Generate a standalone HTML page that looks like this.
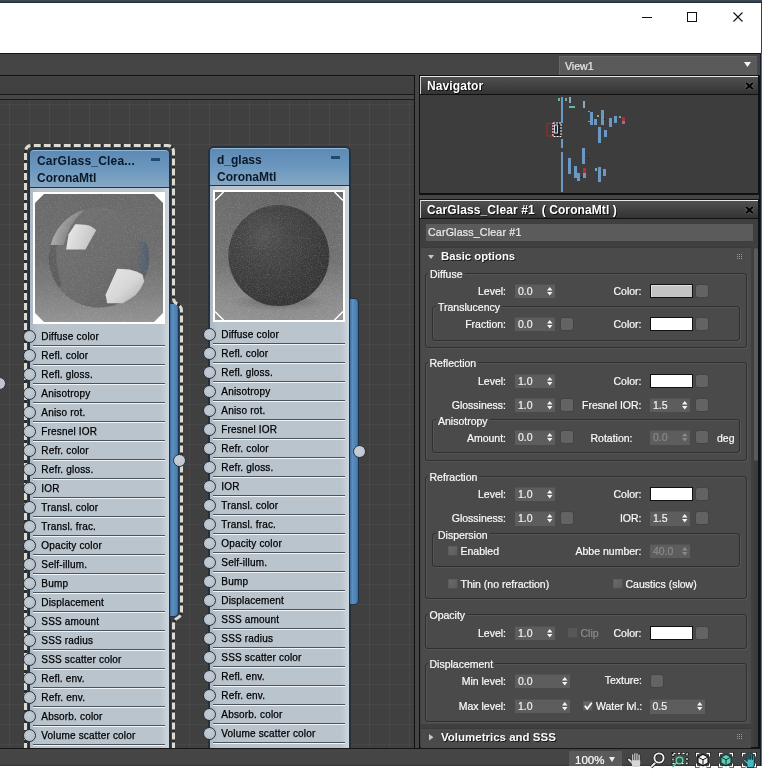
<!DOCTYPE html><html><head><meta charset="utf-8"><style>
*{margin:0;padding:0;box-sizing:border-box}
html,body{width:762px;height:776px;overflow:hidden;background:#fff;position:relative;font-family:"Liberation Sans",sans-serif}
#w{position:absolute;left:0;top:0;width:762px;height:776px;will-change:transform;background:#fff}
#w>div,.abs{position:absolute}
.t{position:absolute;white-space:pre;line-height:1;font-size:10.5px;color:#fff;-webkit-text-stroke:.2px currentColor}
.nt{position:absolute;white-space:pre;line-height:1;font-size:10px;letter-spacing:.18px;color:#000;-webkit-text-stroke:.25px #000}
svg{position:absolute;overflow:visible}
</style></head><body><div id="w"><div style="left:0px;top:0px;width:762px;height:3px;background:linear-gradient(#41505c,#1f2d38)"></div>
<div style="left:0px;top:3px;width:762px;height:50px;background:#fff"></div>
<div style="left:642px;top:17px;width:10px;height:1px;background:#111"></div>
<div style="left:687px;top:12px;width:10px;height:10px;border:1px solid #111"></div>
<svg style="left:733px;top:12px" width="10" height="10"><path d="M0.5 0.5L9.5 9.5M9.5 0.5L0.5 9.5" stroke="#111" stroke-width="1.1"/></svg>
<div style="left:0px;top:53px;width:762px;height:1px;background:#151515"></div>
<div style="left:0px;top:54px;width:762px;height:21px;background:#454545"></div>
<div style="left:559px;top:56px;width:198px;height:19px;background:#5a5a5a;border-top:1px solid #666;border-left:1px solid #666"></div>
<div class="t" style="left:565px;top:61px;font-size:10.6px;color:#e8e8e8">View1</div>
<svg style="left:744px;top:62px" width="7" height="5"><path d="M0 0H7L3.5 5Z" fill="#f4f4f4"/></svg>
<div style="left:0px;top:75px;width:415px;height:1px;background:#111"></div>
<div style="left:0px;top:76px;width:414px;height:18px;background:linear-gradient(#474747,#414141 2px,#404040)"></div>
<div style="left:0px;top:94px;width:414px;height:1px;background:#1a1a1a"></div>
<div style="left:0px;top:95px;width:414px;height:4px;background:#474747"></div>
<div style="left:0px;top:99px;width:414px;height:1px;background:#1a1a1a"></div>
<div style="left:0px;top:100px;width:414px;height:648px;background-color:#404040;background-image:linear-gradient(90deg,rgba(255,255,255,.045) 1px,transparent 1px),linear-gradient(rgba(255,255,255,.035) 1px,transparent 1px);background-size:20px 20px;background-position:9px 4px"></div>
<div style="left:414px;top:75px;width:1px;height:673px;background:#111"></div>
<div style="left:0;top:100px;width:414px;height:648px;overflow:hidden"><div style="position:absolute;left:0;top:-100px;width:414px;height:848px"><div style="position:absolute;left:28px;top:148px;width:143px;height:610px;background:#27313b;border-radius:6px 6px 0 0"></div>
<div style="position:absolute;left:30px;top:150px;width:139px;height:38px;background:linear-gradient(#5d8ab4,#6c98bf 50%,#88a9c4);border-radius:4px 4px 0 0;border-top:1px solid #93b9da"></div>
<div style="position:absolute;left:30px;top:187px;width:139px;height:1px;background:#1d3650"></div>
<div style="position:absolute;left:30px;top:188px;width:139px;height:600px;background:linear-gradient(90deg,#aeb8c2,#bac4cd 6%,#bac4cd 94%,#cfd6dd)"></div>
<div class="nt" style="left:37px;top:155px;font-weight:bold;font-size:12px;color:#0b1828;-webkit-text-stroke:0;letter-spacing:0.2px">CarGlass_Clea...</div>
<div class="nt" style="left:37px;top:172px;font-weight:bold;font-size:12px;color:#0b1828;-webkit-text-stroke:0;letter-spacing:0">CoronaMtl</div>
<div style="position:absolute;left:151px;top:158px;width:9px;height:3px;background:#1e4b6e"></div>
<div style="position:absolute;left:33px;top:192px;width:132px;height:132px;background:#fff"></div>
<svg style="left:35px;top:194px" width="128" height="128">
<defs>
<clipPath id="oct1"><path d="M9 0H119L128 9V119L119 128H9L0 119V9Z"/></clipPath>
<clipPath id="sphc1"><circle cx="64" cy="63.5" r="50"/></clipPath>
<linearGradient id="bg1" x1="0" y1="0" x2="0" y2="1"><stop offset="0" stop-color="#6a6a6a"/><stop offset=".5" stop-color="#6e6e6e"/><stop offset=".75" stop-color="#7e7e7e"/><stop offset="1" stop-color="#939393"/></linearGradient>
<linearGradient id="sph1" x1="0" y1="0" x2="1" y2="1"><stop offset="0" stop-color="#727272"/><stop offset=".6" stop-color="#6b6b6b"/><stop offset="1" stop-color="#5f5f5f"/></linearGradient>
<radialGradient id="cres1" gradientUnits="userSpaceOnUse" cx="88" cy="62" r="74"><stop offset=".8" stop-color="#868686"/><stop offset="1" stop-color="#adadad"/></radialGradient>
<linearGradient id="blu1" x1="0" y1="0" x2="1" y2="0"><stop offset="0" stop-color="#5a6470" stop-opacity="0"/><stop offset=".4" stop-color="#5a6470"/><stop offset="1" stop-color="#505a66"/></linearGradient>
<linearGradient id="hl1" x1="0" y1="0" x2="1" y2=".3"><stop offset="0" stop-color="#ececec"/><stop offset="1" stop-color="#c4c4c4"/></linearGradient>
<linearGradient id="hl2" x1="0" y1="0" x2="1" y2="1"><stop offset="0" stop-color="#e6e6e6"/><stop offset=".55" stop-color="#d6d6d6"/><stop offset="1" stop-color="#a8a8a8"/></linearGradient>
<mask id="cm1"><circle cx="64" cy="63.5" r="50" fill="#fff"/><circle cx="88" cy="62" r="60" fill="#000"/><rect x="0" y="51" width="128" height="80" fill="#000"/></mask>
<filter id="noise1" x="0" y="0" width="1" height="1"><feTurbulence type="fractalNoise" baseFrequency="1.4" numOctaves="1" seed="3"/><feColorMatrix values="0 0 0 0 1  0 0 0 0 1  0 0 0 0 1  0 0 0 -1.6 .8"/><feComposite in2="SourceGraphic" operator="in"/></filter>
</defs>
<g clip-path="url(#oct1)">
<rect width="128" height="128" fill="url(#bg1)"/>
<circle cx="64" cy="63.5" r="50" fill="url(#sph1)"/>
<rect width="128" height="128" fill="url(#cres1)" mask="url(#cm1)"/>
<g clip-path="url(#sphc1)">
<path d="M10 51H22Q19 70 27 92L16 96Z" fill="#4c4c4c" opacity=".45"/>
<rect x="102" y="48" width="14" height="33" fill="url(#blu1)"/>
</g>
<path d="M40.3 30.2Q50 30 55.4 31.9L61.3 36.1L50.4 55.4H31.1L33.6 40.3Z" fill="url(#hl1)"/>
<path d="M82.3 74.8L94.1 75.6Q102 77 107.5 80.6L109.2 87.4Q106 95 100.8 100.8Q94 106 87.4 109.2H72.2L70.6 100.8L77.3 85.7Z" fill="url(#hl2)"/>
<path d="M14 63.5A50 50 0 0 0 64 113.5" fill="none" stroke="#3a3a3a" stroke-width=".7" stroke-dasharray="1 5" opacity=".8"/>
<rect width="128" height="128" filter="url(#noise1)" opacity=".28"/>
</g>
</svg>
<div style="position:absolute;left:33px;top:345px;width:132px;height:1px;background:#4b535b"></div>
<div style="position:absolute;left:33px;top:346px;width:132px;height:1px;background:#f2f5f8"></div>
<div class="nt" style="left:41.3px;top:332px">Diffuse color</div>
<div style="position:absolute;left:33px;top:364px;width:132px;height:1px;background:#4b535b"></div>
<div style="position:absolute;left:33px;top:365px;width:132px;height:1px;background:#f2f5f8"></div>
<div class="nt" style="left:41.3px;top:351px">Refl. color</div>
<div style="position:absolute;left:33px;top:383px;width:132px;height:1px;background:#4b535b"></div>
<div style="position:absolute;left:33px;top:384px;width:132px;height:1px;background:#f2f5f8"></div>
<div class="nt" style="left:41.3px;top:370px">Refl. gloss.</div>
<div style="position:absolute;left:33px;top:402px;width:132px;height:1px;background:#4b535b"></div>
<div style="position:absolute;left:33px;top:403px;width:132px;height:1px;background:#f2f5f8"></div>
<div class="nt" style="left:41.3px;top:389px">Anisotropy</div>
<div style="position:absolute;left:33px;top:421px;width:132px;height:1px;background:#4b535b"></div>
<div style="position:absolute;left:33px;top:422px;width:132px;height:1px;background:#f2f5f8"></div>
<div class="nt" style="left:41.3px;top:408px">Aniso rot.</div>
<div style="position:absolute;left:33px;top:440px;width:132px;height:1px;background:#4b535b"></div>
<div style="position:absolute;left:33px;top:441px;width:132px;height:1px;background:#f2f5f8"></div>
<div class="nt" style="left:41.3px;top:427px">Fresnel IOR</div>
<div style="position:absolute;left:33px;top:459px;width:132px;height:1px;background:#4b535b"></div>
<div style="position:absolute;left:33px;top:460px;width:132px;height:1px;background:#f2f5f8"></div>
<div class="nt" style="left:41.3px;top:446px">Refr. color</div>
<div style="position:absolute;left:33px;top:478px;width:132px;height:1px;background:#4b535b"></div>
<div style="position:absolute;left:33px;top:479px;width:132px;height:1px;background:#f2f5f8"></div>
<div class="nt" style="left:41.3px;top:465px">Refr. gloss.</div>
<div style="position:absolute;left:33px;top:497px;width:132px;height:1px;background:#4b535b"></div>
<div style="position:absolute;left:33px;top:498px;width:132px;height:1px;background:#f2f5f8"></div>
<div class="nt" style="left:41.3px;top:484px">IOR</div>
<div style="position:absolute;left:33px;top:516px;width:132px;height:1px;background:#4b535b"></div>
<div style="position:absolute;left:33px;top:517px;width:132px;height:1px;background:#f2f5f8"></div>
<div class="nt" style="left:41.3px;top:503px">Transl. color</div>
<div style="position:absolute;left:33px;top:535px;width:132px;height:1px;background:#4b535b"></div>
<div style="position:absolute;left:33px;top:536px;width:132px;height:1px;background:#f2f5f8"></div>
<div class="nt" style="left:41.3px;top:522px">Transl. frac.</div>
<div style="position:absolute;left:33px;top:554px;width:132px;height:1px;background:#4b535b"></div>
<div style="position:absolute;left:33px;top:555px;width:132px;height:1px;background:#f2f5f8"></div>
<div class="nt" style="left:41.3px;top:541px">Opacity color</div>
<div style="position:absolute;left:33px;top:573px;width:132px;height:1px;background:#4b535b"></div>
<div style="position:absolute;left:33px;top:574px;width:132px;height:1px;background:#f2f5f8"></div>
<div class="nt" style="left:41.3px;top:560px">Self-illum.</div>
<div style="position:absolute;left:33px;top:592px;width:132px;height:1px;background:#4b535b"></div>
<div style="position:absolute;left:33px;top:593px;width:132px;height:1px;background:#f2f5f8"></div>
<div class="nt" style="left:41.3px;top:579px">Bump</div>
<div style="position:absolute;left:33px;top:611px;width:132px;height:1px;background:#4b535b"></div>
<div style="position:absolute;left:33px;top:612px;width:132px;height:1px;background:#f2f5f8"></div>
<div class="nt" style="left:41.3px;top:598px">Displacement</div>
<div style="position:absolute;left:33px;top:630px;width:132px;height:1px;background:#4b535b"></div>
<div style="position:absolute;left:33px;top:631px;width:132px;height:1px;background:#f2f5f8"></div>
<div class="nt" style="left:41.3px;top:617px">SSS amount</div>
<div style="position:absolute;left:33px;top:649px;width:132px;height:1px;background:#4b535b"></div>
<div style="position:absolute;left:33px;top:650px;width:132px;height:1px;background:#f2f5f8"></div>
<div class="nt" style="left:41.3px;top:636px">SSS radius</div>
<div style="position:absolute;left:33px;top:668px;width:132px;height:1px;background:#4b535b"></div>
<div style="position:absolute;left:33px;top:669px;width:132px;height:1px;background:#f2f5f8"></div>
<div class="nt" style="left:41.3px;top:655px">SSS scatter color</div>
<div style="position:absolute;left:33px;top:687px;width:132px;height:1px;background:#4b535b"></div>
<div style="position:absolute;left:33px;top:688px;width:132px;height:1px;background:#f2f5f8"></div>
<div class="nt" style="left:41.3px;top:674px">Refl. env.</div>
<div style="position:absolute;left:33px;top:706px;width:132px;height:1px;background:#4b535b"></div>
<div style="position:absolute;left:33px;top:707px;width:132px;height:1px;background:#f2f5f8"></div>
<div class="nt" style="left:41.3px;top:693px">Refr. env.</div>
<div style="position:absolute;left:33px;top:725px;width:132px;height:1px;background:#4b535b"></div>
<div style="position:absolute;left:33px;top:726px;width:132px;height:1px;background:#f2f5f8"></div>
<div class="nt" style="left:41.3px;top:712px">Absorb. color</div>
<div style="position:absolute;left:33px;top:744px;width:132px;height:1px;background:#4b535b"></div>
<div style="position:absolute;left:33px;top:745px;width:132px;height:1px;background:#f2f5f8"></div>
<div class="nt" style="left:41.3px;top:731px">Volume scatter color</div>
<div style="position:absolute;left:170px;top:303px;width:9px;height:314px;background:linear-gradient(90deg,#3e6f9f,#5a8fc0 30%,#4b80b2 80%,#3a6a98);border:1px solid #1f3346;border-left:none;border-radius:0 5px 5px 0"></div>
<div style="position:absolute;left:208px;top:146px;width:143px;height:612px;background:#27313b;border-radius:6px 6px 0 0"></div>
<div style="position:absolute;left:210px;top:148px;width:139px;height:38px;background:linear-gradient(#5d8ab4,#6c98bf 50%,#88a9c4);border-radius:4px 4px 0 0;border-top:1px solid #93b9da"></div>
<div style="position:absolute;left:210px;top:185px;width:139px;height:1px;background:#1d3650"></div>
<div style="position:absolute;left:210px;top:186px;width:139px;height:602px;background:linear-gradient(90deg,#aeb8c2,#bac4cd 6%,#bac4cd 94%,#cfd6dd)"></div>
<div class="nt" style="left:217px;top:154px;font-weight:bold;font-size:12px;color:#0b1828;-webkit-text-stroke:0;letter-spacing:0px">d_glass</div>
<div class="nt" style="left:217px;top:171px;font-weight:bold;font-size:12px;color:#0b1828;-webkit-text-stroke:0;letter-spacing:0">CoronaMtl</div>
<div style="position:absolute;left:331px;top:156px;width:9px;height:3px;background:#1e4b6e"></div>
<div style="position:absolute;left:213px;top:190px;width:132px;height:132px;background:#fff"></div>
<svg style="left:215px;top:192px" width="128" height="128">
<defs>
<linearGradient id="bg2" x1="0" y1="0" x2="0" y2="1"><stop offset="0" stop-color="#646464"/><stop offset=".55" stop-color="#6c6c6c"/><stop offset=".8" stop-color="#848484"/><stop offset="1" stop-color="#8e8e8e"/></linearGradient>
<linearGradient id="bgh2" x1="0" y1="0" x2="1" y2="0"><stop offset="0" stop-color="#fff" stop-opacity=".05"/><stop offset=".5" stop-color="#fff" stop-opacity="0"/><stop offset="1" stop-color="#fff" stop-opacity=".04"/></linearGradient>
<radialGradient id="sph2" cx=".36" cy=".3" r=".75"><stop offset="0" stop-color="#545454"/><stop offset=".3" stop-color="#464646"/><stop offset=".75" stop-color="#3a3a3a"/><stop offset="1" stop-color="#333"/></radialGradient>
<radialGradient id="sh2" cx=".5" cy=".5" r=".5"><stop offset="0" stop-color="#000" stop-opacity=".25"/><stop offset="1" stop-color="#000" stop-opacity="0"/></radialGradient>
<filter id="noise2" x="0" y="0" width="1" height="1"><feTurbulence type="fractalNoise" baseFrequency="1.1" numOctaves="1" seed="7"/><feColorMatrix values="0 0 0 0 1  0 0 0 0 1  0 0 0 0 1  0 0 0 -1.5 .8"/><feComposite in2="SourceGraphic" operator="in"/></filter>
</defs>
<rect width="128" height="128" fill="url(#bg2)"/>
<rect width="128" height="128" fill="url(#bgh2)"/>
<ellipse cx="64" cy="110" rx="48" ry="9" fill="url(#sh2)"/>
<circle cx="63.8" cy="63.5" r="50.5" fill="url(#sph2)"/>
<rect width="128" height="128" filter="url(#noise2)" opacity=".3"/>
<path d="M0 8.5L8.5 0M119.5 0L128 8.5M0 119.5L8.5 128M128 119.5L119.5 128" stroke="#fff" stroke-width="1.5"/>
</svg>
<div style="position:absolute;left:213px;top:343px;width:132px;height:1px;background:#4b535b"></div>
<div style="position:absolute;left:213px;top:344px;width:132px;height:1px;background:#f2f5f8"></div>
<div class="nt" style="left:221.3px;top:330px">Diffuse color</div>
<div style="position:absolute;left:213px;top:362px;width:132px;height:1px;background:#4b535b"></div>
<div style="position:absolute;left:213px;top:363px;width:132px;height:1px;background:#f2f5f8"></div>
<div class="nt" style="left:221.3px;top:349px">Refl. color</div>
<div style="position:absolute;left:213px;top:381px;width:132px;height:1px;background:#4b535b"></div>
<div style="position:absolute;left:213px;top:382px;width:132px;height:1px;background:#f2f5f8"></div>
<div class="nt" style="left:221.3px;top:368px">Refl. gloss.</div>
<div style="position:absolute;left:213px;top:400px;width:132px;height:1px;background:#4b535b"></div>
<div style="position:absolute;left:213px;top:401px;width:132px;height:1px;background:#f2f5f8"></div>
<div class="nt" style="left:221.3px;top:387px">Anisotropy</div>
<div style="position:absolute;left:213px;top:419px;width:132px;height:1px;background:#4b535b"></div>
<div style="position:absolute;left:213px;top:420px;width:132px;height:1px;background:#f2f5f8"></div>
<div class="nt" style="left:221.3px;top:406px">Aniso rot.</div>
<div style="position:absolute;left:213px;top:438px;width:132px;height:1px;background:#4b535b"></div>
<div style="position:absolute;left:213px;top:439px;width:132px;height:1px;background:#f2f5f8"></div>
<div class="nt" style="left:221.3px;top:425px">Fresnel IOR</div>
<div style="position:absolute;left:213px;top:457px;width:132px;height:1px;background:#4b535b"></div>
<div style="position:absolute;left:213px;top:458px;width:132px;height:1px;background:#f2f5f8"></div>
<div class="nt" style="left:221.3px;top:444px">Refr. color</div>
<div style="position:absolute;left:213px;top:476px;width:132px;height:1px;background:#4b535b"></div>
<div style="position:absolute;left:213px;top:477px;width:132px;height:1px;background:#f2f5f8"></div>
<div class="nt" style="left:221.3px;top:463px">Refr. gloss.</div>
<div style="position:absolute;left:213px;top:495px;width:132px;height:1px;background:#4b535b"></div>
<div style="position:absolute;left:213px;top:496px;width:132px;height:1px;background:#f2f5f8"></div>
<div class="nt" style="left:221.3px;top:482px">IOR</div>
<div style="position:absolute;left:213px;top:514px;width:132px;height:1px;background:#4b535b"></div>
<div style="position:absolute;left:213px;top:515px;width:132px;height:1px;background:#f2f5f8"></div>
<div class="nt" style="left:221.3px;top:501px">Transl. color</div>
<div style="position:absolute;left:213px;top:533px;width:132px;height:1px;background:#4b535b"></div>
<div style="position:absolute;left:213px;top:534px;width:132px;height:1px;background:#f2f5f8"></div>
<div class="nt" style="left:221.3px;top:520px">Transl. frac.</div>
<div style="position:absolute;left:213px;top:552px;width:132px;height:1px;background:#4b535b"></div>
<div style="position:absolute;left:213px;top:553px;width:132px;height:1px;background:#f2f5f8"></div>
<div class="nt" style="left:221.3px;top:539px">Opacity color</div>
<div style="position:absolute;left:213px;top:571px;width:132px;height:1px;background:#4b535b"></div>
<div style="position:absolute;left:213px;top:572px;width:132px;height:1px;background:#f2f5f8"></div>
<div class="nt" style="left:221.3px;top:558px">Self-illum.</div>
<div style="position:absolute;left:213px;top:590px;width:132px;height:1px;background:#4b535b"></div>
<div style="position:absolute;left:213px;top:591px;width:132px;height:1px;background:#f2f5f8"></div>
<div class="nt" style="left:221.3px;top:577px">Bump</div>
<div style="position:absolute;left:213px;top:609px;width:132px;height:1px;background:#4b535b"></div>
<div style="position:absolute;left:213px;top:610px;width:132px;height:1px;background:#f2f5f8"></div>
<div class="nt" style="left:221.3px;top:596px">Displacement</div>
<div style="position:absolute;left:213px;top:628px;width:132px;height:1px;background:#4b535b"></div>
<div style="position:absolute;left:213px;top:629px;width:132px;height:1px;background:#f2f5f8"></div>
<div class="nt" style="left:221.3px;top:615px">SSS amount</div>
<div style="position:absolute;left:213px;top:647px;width:132px;height:1px;background:#4b535b"></div>
<div style="position:absolute;left:213px;top:648px;width:132px;height:1px;background:#f2f5f8"></div>
<div class="nt" style="left:221.3px;top:634px">SSS radius</div>
<div style="position:absolute;left:213px;top:666px;width:132px;height:1px;background:#4b535b"></div>
<div style="position:absolute;left:213px;top:667px;width:132px;height:1px;background:#f2f5f8"></div>
<div class="nt" style="left:221.3px;top:653px">SSS scatter color</div>
<div style="position:absolute;left:213px;top:685px;width:132px;height:1px;background:#4b535b"></div>
<div style="position:absolute;left:213px;top:686px;width:132px;height:1px;background:#f2f5f8"></div>
<div class="nt" style="left:221.3px;top:672px">Refl. env.</div>
<div style="position:absolute;left:213px;top:704px;width:132px;height:1px;background:#4b535b"></div>
<div style="position:absolute;left:213px;top:705px;width:132px;height:1px;background:#f2f5f8"></div>
<div class="nt" style="left:221.3px;top:691px">Refr. env.</div>
<div style="position:absolute;left:213px;top:723px;width:132px;height:1px;background:#4b535b"></div>
<div style="position:absolute;left:213px;top:724px;width:132px;height:1px;background:#f2f5f8"></div>
<div class="nt" style="left:221.3px;top:710px">Absorb. color</div>
<div style="position:absolute;left:213px;top:742px;width:132px;height:1px;background:#4b535b"></div>
<div style="position:absolute;left:213px;top:743px;width:132px;height:1px;background:#f2f5f8"></div>
<div class="nt" style="left:221.3px;top:729px">Volume scatter color</div>
<div style="position:absolute;left:350px;top:298px;width:9px;height:307px;background:linear-gradient(90deg,#3e6f9f,#5a8fc0 30%,#4b80b2 80%,#3a6a98);border:1px solid #1f3346;border-left:none;border-radius:0 5px 5px 0"></div>
<svg style="left:0;top:0" width="200" height="748"><g fill="none" stroke-width="3"><path d="M25.5 760V152Q25.5 145.5 32 145.5H167Q173.5 145.5 173.5 152V298Q173.5 302.5 177.5 304Q181.5 306 181.5 311V611Q181.5 616 177.5 618Q173.5 620 173.5 625V760" stroke="#2a2c2e"/><path d="M25.5 760V152Q25.5 145.5 32 145.5H167Q173.5 145.5 173.5 152V298Q173.5 302.5 177.5 304Q181.5 306 181.5 311V611Q181.5 616 177.5 618Q173.5 620 173.5 625V760" stroke="#dcdad3" stroke-dasharray="7 3"/></g></svg>
<div style="position:absolute;left:22.65px;top:329.95px;width:13.5px;height:13.5px;border-radius:50%;background:radial-gradient(circle at 45% 40%,#c3cbd3,#b3bbc4);border:1.2px solid #28323c"></div>
<div style="position:absolute;left:22.65px;top:348.95px;width:13.5px;height:13.5px;border-radius:50%;background:radial-gradient(circle at 45% 40%,#c3cbd3,#b3bbc4);border:1.2px solid #28323c"></div>
<div style="position:absolute;left:22.65px;top:367.95px;width:13.5px;height:13.5px;border-radius:50%;background:radial-gradient(circle at 45% 40%,#c3cbd3,#b3bbc4);border:1.2px solid #28323c"></div>
<div style="position:absolute;left:22.65px;top:386.95px;width:13.5px;height:13.5px;border-radius:50%;background:radial-gradient(circle at 45% 40%,#c3cbd3,#b3bbc4);border:1.2px solid #28323c"></div>
<div style="position:absolute;left:22.65px;top:405.95px;width:13.5px;height:13.5px;border-radius:50%;background:radial-gradient(circle at 45% 40%,#c3cbd3,#b3bbc4);border:1.2px solid #28323c"></div>
<div style="position:absolute;left:22.65px;top:424.95px;width:13.5px;height:13.5px;border-radius:50%;background:radial-gradient(circle at 45% 40%,#c3cbd3,#b3bbc4);border:1.2px solid #28323c"></div>
<div style="position:absolute;left:22.65px;top:443.95px;width:13.5px;height:13.5px;border-radius:50%;background:radial-gradient(circle at 45% 40%,#c3cbd3,#b3bbc4);border:1.2px solid #28323c"></div>
<div style="position:absolute;left:22.65px;top:462.95px;width:13.5px;height:13.5px;border-radius:50%;background:radial-gradient(circle at 45% 40%,#c3cbd3,#b3bbc4);border:1.2px solid #28323c"></div>
<div style="position:absolute;left:22.65px;top:481.95px;width:13.5px;height:13.5px;border-radius:50%;background:radial-gradient(circle at 45% 40%,#c3cbd3,#b3bbc4);border:1.2px solid #28323c"></div>
<div style="position:absolute;left:22.65px;top:500.95px;width:13.5px;height:13.5px;border-radius:50%;background:radial-gradient(circle at 45% 40%,#c3cbd3,#b3bbc4);border:1.2px solid #28323c"></div>
<div style="position:absolute;left:22.65px;top:519.95px;width:13.5px;height:13.5px;border-radius:50%;background:radial-gradient(circle at 45% 40%,#c3cbd3,#b3bbc4);border:1.2px solid #28323c"></div>
<div style="position:absolute;left:22.65px;top:538.95px;width:13.5px;height:13.5px;border-radius:50%;background:radial-gradient(circle at 45% 40%,#c3cbd3,#b3bbc4);border:1.2px solid #28323c"></div>
<div style="position:absolute;left:22.65px;top:557.95px;width:13.5px;height:13.5px;border-radius:50%;background:radial-gradient(circle at 45% 40%,#c3cbd3,#b3bbc4);border:1.2px solid #28323c"></div>
<div style="position:absolute;left:22.65px;top:576.95px;width:13.5px;height:13.5px;border-radius:50%;background:radial-gradient(circle at 45% 40%,#c3cbd3,#b3bbc4);border:1.2px solid #28323c"></div>
<div style="position:absolute;left:22.65px;top:595.95px;width:13.5px;height:13.5px;border-radius:50%;background:radial-gradient(circle at 45% 40%,#c3cbd3,#b3bbc4);border:1.2px solid #28323c"></div>
<div style="position:absolute;left:22.65px;top:614.95px;width:13.5px;height:13.5px;border-radius:50%;background:radial-gradient(circle at 45% 40%,#c3cbd3,#b3bbc4);border:1.2px solid #28323c"></div>
<div style="position:absolute;left:22.65px;top:633.95px;width:13.5px;height:13.5px;border-radius:50%;background:radial-gradient(circle at 45% 40%,#c3cbd3,#b3bbc4);border:1.2px solid #28323c"></div>
<div style="position:absolute;left:22.65px;top:652.95px;width:13.5px;height:13.5px;border-radius:50%;background:radial-gradient(circle at 45% 40%,#c3cbd3,#b3bbc4);border:1.2px solid #28323c"></div>
<div style="position:absolute;left:22.65px;top:671.95px;width:13.5px;height:13.5px;border-radius:50%;background:radial-gradient(circle at 45% 40%,#c3cbd3,#b3bbc4);border:1.2px solid #28323c"></div>
<div style="position:absolute;left:22.65px;top:690.95px;width:13.5px;height:13.5px;border-radius:50%;background:radial-gradient(circle at 45% 40%,#c3cbd3,#b3bbc4);border:1.2px solid #28323c"></div>
<div style="position:absolute;left:22.65px;top:709.95px;width:13.5px;height:13.5px;border-radius:50%;background:radial-gradient(circle at 45% 40%,#c3cbd3,#b3bbc4);border:1.2px solid #28323c"></div>
<div style="position:absolute;left:22.65px;top:728.95px;width:13.5px;height:13.5px;border-radius:50%;background:radial-gradient(circle at 45% 40%,#c3cbd3,#b3bbc4);border:1.2px solid #28323c"></div>
<div style="position:absolute;left:172.5px;top:453.5px;width:13px;height:13px;border-radius:50%;background:radial-gradient(circle at 45% 40%,#c9d0d8,#b9c0ca);border:1px solid #2c3640"></div>
<div style="position:absolute;left:202.65px;top:327.95px;width:13.5px;height:13.5px;border-radius:50%;background:radial-gradient(circle at 45% 40%,#c3cbd3,#b3bbc4);border:1.2px solid #28323c"></div>
<div style="position:absolute;left:202.65px;top:346.95px;width:13.5px;height:13.5px;border-radius:50%;background:radial-gradient(circle at 45% 40%,#c3cbd3,#b3bbc4);border:1.2px solid #28323c"></div>
<div style="position:absolute;left:202.65px;top:365.95px;width:13.5px;height:13.5px;border-radius:50%;background:radial-gradient(circle at 45% 40%,#c3cbd3,#b3bbc4);border:1.2px solid #28323c"></div>
<div style="position:absolute;left:202.65px;top:384.95px;width:13.5px;height:13.5px;border-radius:50%;background:radial-gradient(circle at 45% 40%,#c3cbd3,#b3bbc4);border:1.2px solid #28323c"></div>
<div style="position:absolute;left:202.65px;top:403.95px;width:13.5px;height:13.5px;border-radius:50%;background:radial-gradient(circle at 45% 40%,#c3cbd3,#b3bbc4);border:1.2px solid #28323c"></div>
<div style="position:absolute;left:202.65px;top:422.95px;width:13.5px;height:13.5px;border-radius:50%;background:radial-gradient(circle at 45% 40%,#c3cbd3,#b3bbc4);border:1.2px solid #28323c"></div>
<div style="position:absolute;left:202.65px;top:441.95px;width:13.5px;height:13.5px;border-radius:50%;background:radial-gradient(circle at 45% 40%,#c3cbd3,#b3bbc4);border:1.2px solid #28323c"></div>
<div style="position:absolute;left:202.65px;top:460.95px;width:13.5px;height:13.5px;border-radius:50%;background:radial-gradient(circle at 45% 40%,#c3cbd3,#b3bbc4);border:1.2px solid #28323c"></div>
<div style="position:absolute;left:202.65px;top:479.95px;width:13.5px;height:13.5px;border-radius:50%;background:radial-gradient(circle at 45% 40%,#c3cbd3,#b3bbc4);border:1.2px solid #28323c"></div>
<div style="position:absolute;left:202.65px;top:498.95px;width:13.5px;height:13.5px;border-radius:50%;background:radial-gradient(circle at 45% 40%,#c3cbd3,#b3bbc4);border:1.2px solid #28323c"></div>
<div style="position:absolute;left:202.65px;top:517.95px;width:13.5px;height:13.5px;border-radius:50%;background:radial-gradient(circle at 45% 40%,#c3cbd3,#b3bbc4);border:1.2px solid #28323c"></div>
<div style="position:absolute;left:202.65px;top:536.95px;width:13.5px;height:13.5px;border-radius:50%;background:radial-gradient(circle at 45% 40%,#c3cbd3,#b3bbc4);border:1.2px solid #28323c"></div>
<div style="position:absolute;left:202.65px;top:555.95px;width:13.5px;height:13.5px;border-radius:50%;background:radial-gradient(circle at 45% 40%,#c3cbd3,#b3bbc4);border:1.2px solid #28323c"></div>
<div style="position:absolute;left:202.65px;top:574.95px;width:13.5px;height:13.5px;border-radius:50%;background:radial-gradient(circle at 45% 40%,#c3cbd3,#b3bbc4);border:1.2px solid #28323c"></div>
<div style="position:absolute;left:202.65px;top:593.95px;width:13.5px;height:13.5px;border-radius:50%;background:radial-gradient(circle at 45% 40%,#c3cbd3,#b3bbc4);border:1.2px solid #28323c"></div>
<div style="position:absolute;left:202.65px;top:612.95px;width:13.5px;height:13.5px;border-radius:50%;background:radial-gradient(circle at 45% 40%,#c3cbd3,#b3bbc4);border:1.2px solid #28323c"></div>
<div style="position:absolute;left:202.65px;top:631.95px;width:13.5px;height:13.5px;border-radius:50%;background:radial-gradient(circle at 45% 40%,#c3cbd3,#b3bbc4);border:1.2px solid #28323c"></div>
<div style="position:absolute;left:202.65px;top:650.95px;width:13.5px;height:13.5px;border-radius:50%;background:radial-gradient(circle at 45% 40%,#c3cbd3,#b3bbc4);border:1.2px solid #28323c"></div>
<div style="position:absolute;left:202.65px;top:669.95px;width:13.5px;height:13.5px;border-radius:50%;background:radial-gradient(circle at 45% 40%,#c3cbd3,#b3bbc4);border:1.2px solid #28323c"></div>
<div style="position:absolute;left:202.65px;top:688.95px;width:13.5px;height:13.5px;border-radius:50%;background:radial-gradient(circle at 45% 40%,#c3cbd3,#b3bbc4);border:1.2px solid #28323c"></div>
<div style="position:absolute;left:202.65px;top:707.95px;width:13.5px;height:13.5px;border-radius:50%;background:radial-gradient(circle at 45% 40%,#c3cbd3,#b3bbc4);border:1.2px solid #28323c"></div>
<div style="position:absolute;left:202.65px;top:726.95px;width:13.5px;height:13.5px;border-radius:50%;background:radial-gradient(circle at 45% 40%,#c3cbd3,#b3bbc4);border:1.2px solid #28323c"></div>
<div style="position:absolute;left:352.5px;top:445.0px;width:13px;height:13px;border-radius:50%;background:radial-gradient(circle at 45% 40%,#c9d0d8,#b9c0ca);border:1px solid #2c3640"></div>
<div style="position:absolute;left:-7px;top:377px;width:13px;height:13px;border-radius:50%;background:#c2c2d2;border:1px solid #2c3640"></div></div></div>
<div style="left:415px;top:75px;width:4px;height:673px;background:#454545"></div>
<div style="left:419px;top:75px;width:340px;height:120px;background:#111"></div>
<div style="left:420px;top:76px;width:338px;height:1px;background:#e8e8e8"></div>
<div style="left:420px;top:76px;width:1px;height:18px;background:#cfcfcf"></div>
<div style="left:421px;top:77px;width:337px;height:17px;background:linear-gradient(#505050,#333333)"></div>
<div class="t" style="left:427px;top:80px;font-weight:bold;font-size:12px;color:#fff;text-shadow:1px 1px 0 #111,-1px 0 0 #222;-webkit-text-stroke:0;letter-spacing:.1px">Navigator</div>
<svg style="left:745px;top:82px" width="9" height="8"><path d="M1 1L8 7M8 1L1 7" stroke="#bbb" stroke-width="3.2" opacity=".35"/><path d="M1.2 1L7.8 7M7.8 1L1.2 7" stroke="#000" stroke-width="2"/></svg>
<div style="left:420px;top:95px;width:338px;height:98px;background:#3d3d3d"></div>
<div style="left:759px;top:75px;width:2px;height:125px;background:#454545"></div>
<svg style="left:420px;top:95px;filter:blur(.3px)" width="338" height="98"><g transform="translate(-420,-95)"><rect x="561" y="97" width="2" height="26" fill="#6a9ac6"/><rect x="561" y="139" width="2" height="9" fill="#6a9ac6"/><rect x="561" y="152" width="2" height="40" fill="#6a9ac6"/><rect x="558" y="98" width="2" height="3" fill="#62b8a4"/><rect x="565" y="98" width="2" height="3" fill="#7aa890"/><rect x="569" y="97" width="2" height="6" fill="#8fa6bc"/><rect x="569" y="106" width="6" height="2" fill="#62b8a4"/><rect x="583" y="101" width="2" height="7" fill="#8fa6bc"/><rect x="590" y="112" width="3" height="13" fill="#6b98c4"/><rect x="588" y="111" width="2" height="1" fill="#62b8a4"/><rect x="588" y="121" width="2" height="1" fill="#62b8a4"/><rect x="594" y="119" width="3" height="6" fill="#6b98c4"/><rect x="597" y="115" width="2" height="2" fill="#62b8a4"/><rect x="601" y="110" width="3" height="15" fill="#6b98c4"/><rect x="604" y="119" width="1" height="1" fill="#111"/><rect x="598" y="127" width="3" height="16" fill="#6b98c4"/><rect x="604" y="130" width="3" height="7" fill="#6b98c4"/><rect x="609" y="118" width="3" height="9" fill="#6b98c4"/><rect x="614" y="116" width="3" height="7" fill="#6b98c4"/><rect x="619" y="116" width="2" height="2" fill="#62b8a4"/><rect x="622" y="117" width="3" height="4" fill="#b03030"/><rect x="622" y="121" width="3" height="3" fill="#8a70b0"/><rect x="582" y="148" width="3" height="16" fill="#6b98c4"/><rect x="588" y="158" width="1" height="1" fill="#111"/><rect x="568" y="158" width="3" height="16" fill="#6b98c4"/><rect x="574" y="166" width="3" height="12" fill="#6b98c4"/><rect x="577" y="173" width="3" height="8" fill="#6b98c4"/><rect x="583" y="168" width="3" height="5" fill="#b03030"/><rect x="583" y="173" width="3" height="5" fill="#6b98c4"/><rect x="581" y="177" width="1" height="1" fill="#111"/><rect x="595" y="168" width="2" height="3" fill="#62b8a4"/><rect x="598" y="167" width="3" height="15" fill="#6b98c4"/><rect x="603" y="169" width="3" height="7" fill="#6b98c4"/><rect x="547" y="123.5" width="6" height="12.5" fill="none" stroke="#a02828" stroke-width="1.2"/><rect x="553" y="123" width="8" height="13.5" fill="#222" stroke="#fff" stroke-width="1" stroke-dasharray="2 1"/><rect x="554.5" y="125" width="3" height="8" fill="#1a3050" stroke="#fff" stroke-width=".8"/></g></svg>
<div style="left:419px;top:195px;width:340px;height:4px;background:#454545"></div>
<div style="left:419px;top:199px;width:340px;height:549px;background:#111"></div>
<div style="left:420px;top:200px;width:338px;height:1px;background:#e8e8e8"></div>
<div style="left:420px;top:200px;width:1px;height:18px;background:#cfcfcf"></div>
<div style="left:421px;top:201px;width:337px;height:17px;background:linear-gradient(#505050,#333333)"></div>
<div class="t" style="left:427px;top:204px;font-weight:bold;font-size:12px;color:#fff;text-shadow:1px 1px 0 #111;-webkit-text-stroke:0;letter-spacing:.1px">CarGlass_Clear #1&nbsp;&nbsp;( CoronaMtl )</div>
<svg style="left:745px;top:206px" width="9" height="8"><path d="M1 1L8 7M8 1L1 7" stroke="#bbb" stroke-width="3.2" opacity=".35"/><path d="M1.2 1L7.8 7M7.8 1L1.2 7" stroke="#000" stroke-width="2"/></svg>
<div style="left:420px;top:219px;width:338px;height:528px;background:#3f3f3f"></div>
<div style="left:426px;top:224px;width:327px;height:17px;background:#5b5b5b"></div>
<div class="t" style="left:428px;top:226.5px;font-size:10.6px;color:#ececec;letter-spacing:.2px">CarGlass_Clear #1</div>
<div style="left:421px;top:247px;width:330px;height:477px;background:#4a4a4a;border-top:1px solid #3a3a3a"></div>
<svg style="left:428px;top:255px" width="6" height="4"><path d="M0 0H6L3 4Z" fill="#c8c8c8"/></svg>
<div class="t" style="left:441.0px;top:250.93px;font-size:11.3px;color:#fafafa;font-weight:bold;text-shadow:1px 1px 0 #1a1a1a;-webkit-text-stroke:0">Basic options</div>
<div style="left:737px;top:253.5px;width:1px;height:1px;background:#9a9a9a"></div>
<div style="left:737px;top:255.5px;width:1px;height:1px;background:#9a9a9a"></div>
<div style="left:737px;top:257.5px;width:1px;height:1px;background:#9a9a9a"></div>
<div style="left:739px;top:253.5px;width:1px;height:1px;background:#9a9a9a"></div>
<div style="left:739px;top:255.5px;width:1px;height:1px;background:#9a9a9a"></div>
<div style="left:739px;top:257.5px;width:1px;height:1px;background:#9a9a9a"></div>
<div style="left:741px;top:253.5px;width:1px;height:1px;background:#9a9a9a"></div>
<div style="left:741px;top:255.5px;width:1px;height:1px;background:#9a9a9a"></div>
<div style="left:741px;top:257.5px;width:1px;height:1px;background:#9a9a9a"></div>
<div style="left:751px;top:247px;width:3px;height:500px;background:#404040"></div>
<div style="left:754px;top:247px;width:4px;height:500px;background:#3c3c3c"></div>
<div style="left:754px;top:248px;width:4px;height:213px;background:#5a5a5a;border-radius:2px"></div>
<div style="left:425px;top:273px;width:322px;height:75px;border:1px solid #2f2f2f;border-radius:3px;box-shadow:inset 1px 1px 0 #555,1px 1px 0 #555"></div>
<div class="t" style="left:428.0px;top:269.11px;font-size:10.5px;color:#fafafa;background:#4a4a4a;padding:0 2px">Diffuse</div>
<div class="t" style="left:306.0px;width:200px;text-align:right;top:285.61px;font-size:10.5px;color:#fafafa;">Level:</div>
<div style="left:515px;top:284px;width:40px;height:14px;background:#5d5d5d;border-top:1px solid #525252"></div>
<div class="t" style="left:518.0px;top:286.11px;font-size:10.5px;color:#f2f2f2;">0.0</div>
<svg style="left:546.5px;top:287.0px" width="6" height="9"><path d="M0 3.5H5.5L2.75 0Z M0 5H5.5L2.75 8.5Z" fill="#f2f2f2"/></svg>
<div class="t" style="left:441.5px;width:200px;text-align:right;top:285.61px;font-size:10.5px;color:#fafafa;">Color:</div>
<div style="left:650px;top:284px;width:43px;height:14px;background:#c3c3c3;border:1px solid #111;box-shadow:inset 1px 1px 0 rgba(255,255,255,.5)"></div>
<div style="left:695px;top:284px;width:14px;height:14px;background:#636363;border:1px solid #444;border-radius:3px"></div>
<div style="left:432px;top:306px;width:308px;height:35px;border:1px solid #2f2f2f;border-radius:3px;box-shadow:inset 1px 1px 0 #555,1px 1px 0 #555"></div>
<div class="t" style="left:436.0px;top:302.11px;font-size:10.5px;color:#fafafa;background:#4a4a4a;padding:0 2px">Translucency</div>
<div class="t" style="left:306.0px;width:200px;text-align:right;top:318.61px;font-size:10.5px;color:#fafafa;">Fraction:</div>
<div style="left:515px;top:317px;width:40px;height:14px;background:#5d5d5d;border-top:1px solid #525252"></div>
<div class="t" style="left:518.0px;top:319.11px;font-size:10.5px;color:#f2f2f2;">0.0</div>
<svg style="left:546.5px;top:320.0px" width="6" height="9"><path d="M0 3.5H5.5L2.75 0Z M0 5H5.5L2.75 8.5Z" fill="#f2f2f2"/></svg>
<div style="left:560px;top:317px;width:14px;height:14px;background:#636363;border:1px solid #444;border-radius:3px"></div>
<div class="t" style="left:441.5px;width:200px;text-align:right;top:318.61px;font-size:10.5px;color:#fafafa;">Color:</div>
<div style="left:650px;top:317px;width:43px;height:14px;background:#fff;border:1px solid #111;box-shadow:inset 1px 1px 0 rgba(255,255,255,.5)"></div>
<div style="left:695px;top:317px;width:14px;height:14px;background:#636363;border:1px solid #444;border-radius:3px"></div>
<div style="left:425px;top:362px;width:322px;height:99px;border:1px solid #2f2f2f;border-radius:3px;box-shadow:inset 1px 1px 0 #555,1px 1px 0 #555"></div>
<div class="t" style="left:427.5px;top:358.11px;font-size:10.5px;color:#fafafa;background:#4a4a4a;padding:0 2px">Reflection</div>
<div class="t" style="left:306.0px;width:200px;text-align:right;top:375.61px;font-size:10.5px;color:#fafafa;">Level:</div>
<div style="left:515px;top:374px;width:40px;height:14px;background:#5d5d5d;border-top:1px solid #525252"></div>
<div class="t" style="left:518.0px;top:376.11px;font-size:10.5px;color:#f2f2f2;">1.0</div>
<svg style="left:546.5px;top:377.0px" width="6" height="9"><path d="M0 3.5H5.5L2.75 0Z M0 5H5.5L2.75 8.5Z" fill="#f2f2f2"/></svg>
<div class="t" style="left:441.5px;width:200px;text-align:right;top:375.61px;font-size:10.5px;color:#fafafa;">Color:</div>
<div style="left:650px;top:374px;width:43px;height:14px;background:#fff;border:1px solid #111;box-shadow:inset 1px 1px 0 rgba(255,255,255,.5)"></div>
<div style="left:695px;top:374px;width:14px;height:14px;background:#636363;border:1px solid #444;border-radius:3px"></div>
<div class="t" style="left:306.0px;width:200px;text-align:right;top:399.61px;font-size:10.5px;color:#fafafa;">Glossiness:</div>
<div style="left:515px;top:398px;width:40px;height:14px;background:#5d5d5d;border-top:1px solid #525252"></div>
<div class="t" style="left:518.0px;top:400.11px;font-size:10.5px;color:#f2f2f2;">1.0</div>
<svg style="left:546.5px;top:401.0px" width="6" height="9"><path d="M0 3.5H5.5L2.75 0Z M0 5H5.5L2.75 8.5Z" fill="#f2f2f2"/></svg>
<div style="left:560px;top:398px;width:14px;height:14px;background:#636363;border:1px solid #444;border-radius:3px"></div>
<div class="t" style="left:441.5px;width:200px;text-align:right;top:399.61px;font-size:10.5px;color:#fafafa;">Fresnel IOR:</div>
<div style="left:650px;top:398px;width:40px;height:14px;background:#5d5d5d;border-top:1px solid #525252"></div>
<div class="t" style="left:653.0px;top:400.11px;font-size:10.5px;color:#f2f2f2;">1.5</div>
<svg style="left:681.5px;top:401.0px" width="6" height="9"><path d="M0 3.5H5.5L2.75 0Z M0 5H5.5L2.75 8.5Z" fill="#f2f2f2"/></svg>
<div style="left:695px;top:398px;width:14px;height:14px;background:#636363;border:1px solid #444;border-radius:3px"></div>
<div style="left:432px;top:419px;width:308px;height:34px;border:1px solid #2f2f2f;border-radius:3px;box-shadow:inset 1px 1px 0 #555,1px 1px 0 #555"></div>
<div class="t" style="left:436.0px;top:415.61px;font-size:10.5px;color:#fafafa;background:#4a4a4a;padding:0 2px">Anisotropy</div>
<div class="t" style="left:306.0px;width:200px;text-align:right;top:432.61px;font-size:10.5px;color:#fafafa;">Amount:</div>
<div style="left:515px;top:430px;width:40px;height:15px;background:#5d5d5d;border-top:1px solid #525252"></div>
<div class="t" style="left:518.0px;top:432.11px;font-size:10.5px;color:#f2f2f2;">0.0</div>
<svg style="left:546.5px;top:433.0px" width="6" height="9"><path d="M0 3.5H5.5L2.75 0Z M0 5H5.5L2.75 8.5Z" fill="#f2f2f2"/></svg>
<div style="left:560px;top:430px;width:14px;height:14px;background:#636363;border:1px solid #444;border-radius:3px"></div>
<div class="t" style="left:432.5px;width:200px;text-align:right;top:432.61px;font-size:10.5px;color:#fafafa;">Rotation:</div>
<div style="left:650px;top:430px;width:40px;height:15px;background:#5d5d5d;border-top:1px solid #525252"></div>
<div class="t" style="left:653.0px;top:432.11px;font-size:10.5px;color:#8a8a8a;">0.0</div>
<svg style="left:681.5px;top:433.0px" width="6" height="9"><path d="M0 3.5H5.5L2.75 0Z M0 5H5.5L2.75 8.5Z" fill="#8a8a8a"/></svg>
<div style="left:695px;top:430px;width:14px;height:14px;background:#636363;border:1px solid #444;border-radius:3px"></div>
<div class="t" style="left:717.0px;top:432.61px;font-size:10.5px;color:#fafafa;">deg</div>
<div style="left:425px;top:476px;width:322px;height:123px;border:1px solid #2f2f2f;border-radius:3px;box-shadow:inset 1px 1px 0 #555,1px 1px 0 #555"></div>
<div class="t" style="left:427.5px;top:472.11px;font-size:10.5px;color:#fafafa;background:#4a4a4a;padding:0 2px">Refraction</div>
<div class="t" style="left:306.0px;width:200px;text-align:right;top:488.61px;font-size:10.5px;color:#fafafa;">Level:</div>
<div style="left:515px;top:487px;width:40px;height:14px;background:#5d5d5d;border-top:1px solid #525252"></div>
<div class="t" style="left:518.0px;top:489.11px;font-size:10.5px;color:#f2f2f2;">1.0</div>
<svg style="left:546.5px;top:490.0px" width="6" height="9"><path d="M0 3.5H5.5L2.75 0Z M0 5H5.5L2.75 8.5Z" fill="#f2f2f2"/></svg>
<div class="t" style="left:441.5px;width:200px;text-align:right;top:488.61px;font-size:10.5px;color:#fafafa;">Color:</div>
<div style="left:650px;top:487px;width:43px;height:14px;background:#fff;border:1px solid #111;box-shadow:inset 1px 1px 0 rgba(255,255,255,.5)"></div>
<div style="left:695px;top:487px;width:14px;height:14px;background:#636363;border:1px solid #444;border-radius:3px"></div>
<div class="t" style="left:306.0px;width:200px;text-align:right;top:513.11px;font-size:10.5px;color:#fafafa;">Glossiness:</div>
<div style="left:515px;top:511px;width:40px;height:15px;background:#5d5d5d;border-top:1px solid #525252"></div>
<div class="t" style="left:518.0px;top:513.11px;font-size:10.5px;color:#f2f2f2;">1.0</div>
<svg style="left:546.5px;top:514.0px" width="6" height="9"><path d="M0 3.5H5.5L2.75 0Z M0 5H5.5L2.75 8.5Z" fill="#f2f2f2"/></svg>
<div style="left:560px;top:511px;width:14px;height:14px;background:#636363;border:1px solid #444;border-radius:3px"></div>
<div class="t" style="left:441.5px;width:200px;text-align:right;top:513.11px;font-size:10.5px;color:#fafafa;">IOR:</div>
<div style="left:650px;top:511px;width:40px;height:15px;background:#5d5d5d;border-top:1px solid #525252"></div>
<div class="t" style="left:653.0px;top:513.11px;font-size:10.5px;color:#f2f2f2;">1.5</div>
<svg style="left:681.5px;top:514.0px" width="6" height="9"><path d="M0 3.5H5.5L2.75 0Z M0 5H5.5L2.75 8.5Z" fill="#f2f2f2"/></svg>
<div style="left:695px;top:511px;width:14px;height:14px;background:#636363;border:1px solid #444;border-radius:3px"></div>
<div style="left:432px;top:533px;width:308px;height:34px;border:1px solid #2f2f2f;border-radius:3px;box-shadow:inset 1px 1px 0 #555,1px 1px 0 #555"></div>
<div class="t" style="left:436.0px;top:529.61px;font-size:10.5px;color:#fafafa;background:#4a4a4a;padding:0 2px">Dispersion</div>
<div style="left:448px;top:546px;width:10px;height:10px;background:linear-gradient(135deg,#6a6a6a,#5c5c5c);border:1px solid #4f4f4f;border-top-color:#5c5c5c;border-left-color:#5c5c5c"></div>
<div class="t" style="left:460.5px;top:545.61px;font-size:10.5px;color:#fafafa;">Enabled</div>
<div class="t" style="left:441.5px;width:200px;text-align:right;top:545.61px;font-size:10.5px;color:#fafafa;">Abbe number:</div>
<div style="left:650px;top:544px;width:40px;height:14px;background:#5d5d5d;border-top:1px solid #525252"></div>
<div class="t" style="left:653.0px;top:546.11px;font-size:10.5px;color:#8a8a8a;">40.0</div>
<svg style="left:681.5px;top:547.0px" width="6" height="9"><path d="M0 3.5H5.5L2.75 0Z M0 5H5.5L2.75 8.5Z" fill="#8a8a8a"/></svg>
<div style="left:448px;top:579px;width:10px;height:10px;background:linear-gradient(135deg,#6a6a6a,#5c5c5c);border:1px solid #4f4f4f;border-top-color:#5c5c5c;border-left-color:#5c5c5c"></div>
<div class="t" style="left:460.5px;top:578.61px;font-size:10.5px;color:#fafafa;">Thin (no refraction)</div>
<div style="left:612.5px;top:579px;width:10px;height:10px;background:linear-gradient(135deg,#6a6a6a,#5c5c5c);border:1px solid #4f4f4f;border-top-color:#5c5c5c;border-left-color:#5c5c5c"></div>
<div class="t" style="left:625.5px;top:578.61px;font-size:10.5px;color:#fafafa;">Caustics (slow)</div>
<div style="left:425px;top:614px;width:322px;height:35px;border:1px solid #2f2f2f;border-radius:3px;box-shadow:inset 1px 1px 0 #555,1px 1px 0 #555"></div>
<div class="t" style="left:427.5px;top:609.61px;font-size:10.5px;color:#fafafa;background:#4a4a4a;padding:0 2px">Opacity</div>
<div class="t" style="left:306.0px;width:200px;text-align:right;top:627.61px;font-size:10.5px;color:#fafafa;">Level:</div>
<div style="left:515px;top:626px;width:40px;height:14px;background:#5d5d5d;border-top:1px solid #525252"></div>
<div class="t" style="left:518.0px;top:628.11px;font-size:10.5px;color:#f2f2f2;">1.0</div>
<svg style="left:546.5px;top:629.0px" width="6" height="9"><path d="M0 3.5H5.5L2.75 0Z M0 5H5.5L2.75 8.5Z" fill="#f2f2f2"/></svg>
<div style="left:567.5px;top:628px;width:10px;height:10px;background:#575757;border-right:1px solid #4e4e4e;border-bottom:1px solid #4e4e4e"></div>
<div class="t" style="left:580.5px;top:627.61px;font-size:10.5px;color:#8c8c8c;">Clip</div>
<div class="t" style="left:441.5px;width:200px;text-align:right;top:627.61px;font-size:10.5px;color:#fafafa;">Color:</div>
<div style="left:650px;top:626px;width:43px;height:14px;background:#fff;border:1px solid #111;box-shadow:inset 1px 1px 0 rgba(255,255,255,.5)"></div>
<div style="left:695px;top:626px;width:14px;height:14px;background:#636363;border:1px solid #444;border-radius:3px"></div>
<div style="left:425px;top:663px;width:322px;height:59px;border:1px solid #2f2f2f;border-radius:3px;box-shadow:inset 1px 1px 0 #555,1px 1px 0 #555"></div>
<div class="t" style="left:427.5px;top:658.61px;font-size:10.5px;color:#fafafa;background:#4a4a4a;padding:0 2px">Displacement</div>
<div class="t" style="left:306.0px;width:200px;text-align:right;top:675.61px;font-size:10.5px;color:#fafafa;">Min level:</div>
<div style="left:515px;top:673.5px;width:55px;height:14.5px;background:#5d5d5d;border-top:1px solid #525252"></div>
<div class="t" style="left:518.0px;top:675.61px;font-size:10.5px;color:#f2f2f2;">0.0</div>
<svg style="left:561.5px;top:676.5px" width="6" height="9"><path d="M0 3.5H5.5L2.75 0Z M0 5H5.5L2.75 8.5Z" fill="#f2f2f2"/></svg>
<div class="t" style="left:442.0px;width:200px;text-align:right;top:675.11px;font-size:10.5px;color:#fafafa;">Texture:</div>
<div style="left:649.5px;top:674px;width:14px;height:14px;background:#636363;border:1px solid #444;border-radius:3px"></div>
<div class="t" style="left:306.0px;width:200px;text-align:right;top:700.61px;font-size:10.5px;color:#fafafa;">Max level:</div>
<div style="left:515px;top:699px;width:55px;height:14px;background:#5d5d5d;border-top:1px solid #525252"></div>
<div class="t" style="left:518.0px;top:701.11px;font-size:10.5px;color:#f2f2f2;">1.0</div>
<svg style="left:561.5px;top:702.0px" width="6" height="9"><path d="M0 3.5H5.5L2.75 0Z M0 5H5.5L2.75 8.5Z" fill="#f2f2f2"/></svg>
<div style="left:583px;top:701px;width:10px;height:10px;background:linear-gradient(135deg,#6a6a6a,#5c5c5c);border:1px solid #4f4f4f;border-top-color:#5c5c5c;border-left-color:#5c5c5c"></div>
<svg style="left:583px;top:701px" width="10" height="10"><path d="M1.8 4.8L4.2 7.8L8.8 1.8" stroke="#fff" stroke-width="1.7" fill="none"/></svg>
<div class="t" style="left:596.0px;top:700.61px;font-size:10.5px;color:#fafafa;">Water lvl.:</div>
<div style="left:649.5px;top:699px;width:55.5px;height:14.5px;background:#5d5d5d;border-top:1px solid #525252"></div>
<div class="t" style="left:652.5px;top:701.11px;font-size:10.5px;color:#f2f2f2;">0.5</div>
<svg style="left:696.5px;top:702.0px" width="6" height="9"><path d="M0 3.5H5.5L2.75 0Z M0 5H5.5L2.75 8.5Z" fill="#f2f2f2"/></svg>
<div style="left:421px;top:728px;width:330px;height:20px;background:#4a4a4a;border-top:1px solid #3a3a3a"></div>
<svg style="left:429px;top:734px" width="5" height="7"><path d="M0 0V6.5L4.5 3.25Z" fill="#c8c8c8"/></svg>
<div style="left:737px;top:734px;width:1px;height:1px;background:#9a9a9a"></div>
<div style="left:737px;top:736px;width:1px;height:1px;background:#9a9a9a"></div>
<div style="left:737px;top:738px;width:1px;height:1px;background:#9a9a9a"></div>
<div style="left:739px;top:734px;width:1px;height:1px;background:#9a9a9a"></div>
<div style="left:739px;top:736px;width:1px;height:1px;background:#9a9a9a"></div>
<div style="left:739px;top:738px;width:1px;height:1px;background:#9a9a9a"></div>
<div style="left:741px;top:734px;width:1px;height:1px;background:#9a9a9a"></div>
<div style="left:741px;top:736px;width:1px;height:1px;background:#9a9a9a"></div>
<div style="left:741px;top:738px;width:1px;height:1px;background:#9a9a9a"></div>
<div class="t" style="left:441.0px;top:731.77px;font-size:11.5px;color:#fafafa;font-weight:bold;text-shadow:1px 1px 0 #1a1a1a;-webkit-text-stroke:0">Volumetrics and SSS</div>
<div style="left:0px;top:748px;width:760px;height:1px;background:#161616"></div>
<div style="left:0px;top:749px;width:760px;height:17px;background:linear-gradient(#464646,#444 90%,#303030)"></div>
<div style="left:569px;top:751px;width:53px;height:15px;background:#5a5a5a"></div>
<div class="t" style="left:575px;top:754.5px;font-size:11.5px;color:#fff">100%</div>
<svg style="left:609px;top:757px" width="6" height="5"><path d="M0 0H6L3 5Z" fill="#eee"/></svg>
<svg style="left:622px;top:747px" width="22" height="20">
<path d="M10.8 16.2L6.8 12.6" stroke="#151515" stroke-width="3.4" stroke-linecap="round"/>
<path d="M10.8 16.2L6.8 12.6" stroke="#e0e0e0" stroke-width="2" stroke-linecap="round"/>
<g stroke="#151515" stroke-width=".7" fill="#ececec">
<rect x="9.8" y="6.8" width="2.1" height="9" rx="1"/>
<rect x="11.9" y="5.6" width="2.1" height="10" rx="1"/>
<rect x="14" y="5.8" width="2.1" height="10" rx="1"/>
<rect x="16.1" y="7" width="2" height="9" rx="1"/>
</g>
<path d="M9.6 13.2H18.2V17Q18 19 17 20H10.6Q9.6 18 9.6 16Z" fill="#d6d6d6"/>
</svg>
<svg style="left:648px;top:751px" width="18" height="17"><path d="M3 16L8.5 10.5" stroke="#1a1a1a" stroke-width="3.6"/><path d="M3 16L8.5 10.5" stroke="#e8e8e8" stroke-width="2"/><circle cx="11" cy="7" r="4.6" fill="none" stroke="#1a1a1a" stroke-width="3.4"/><circle cx="11" cy="7" r="4.6" fill="none" stroke="#f0f0f0" stroke-width="1.9"/></svg>
<svg style="left:671px;top:752px" width="18" height="16"><rect x="2" y="1.5" width="14" height="10" fill="#3d5a50" opacity=".55"/><rect x="2" y="1.5" width="14" height="10" fill="none" stroke="#000" stroke-width="2.6" stroke-dasharray="3 1.5"/><rect x="2" y="1.5" width="14" height="10" fill="none" stroke="#fff" stroke-width="1.3" stroke-dasharray="2.2 2.3" stroke-dashoffset="-.4"/><path d="M1.5 15L5.5 11" stroke="#5fcaa8" stroke-width="1.6"/><circle cx="8.5" cy="8.5" r="3.3" fill="#2d5a4c" stroke="#6fd2b2" stroke-width="1.3"/></svg>
<svg style="left:694px;top:751px" width="18" height="17"><path d="M2.5 5.5V2.5H5.5M12.5 2.5H15.5V5.5M2.5 12.5V15.5H5.5M12.5 15.5H15.5V12.5" fill="none" stroke="#000" stroke-width="2.6"/><path d="M2.5 5.5V2.5H5.5M12.5 2.5H15.5V5.5M2.5 12.5V15.5H5.5M12.5 15.5H15.5V12.5" fill="none" stroke="#fff" stroke-width="1.3"/><path d="M9 3.2L14 6V12L9 14.8L4 12V6Z" fill="#f0f0f0" stroke="#111" stroke-width="1.1"/><path d="M4 6L9 8.8L14 6M9 8.8V14.8" fill="none" stroke="#111" stroke-width="1"/></svg>
<svg style="left:717px;top:751px" width="18" height="17"><path d="M2.5 5.5V2.5H5.5M12.5 2.5H15.5V5.5M2.5 12.5V15.5H5.5M12.5 15.5H15.5V12.5" fill="none" stroke="#000" stroke-width="2.6"/><path d="M2.5 5.5V2.5H5.5M12.5 2.5H15.5V5.5M2.5 12.5V15.5H5.5M12.5 15.5H15.5V12.5" fill="none" stroke="#fff" stroke-width="1.3"/><path d="M9 3.2L14 6V12L9 14.8L4 12V6Z" fill="#62cbb4" stroke="#0d3a33" stroke-width="1.1"/><path d="M4 6L9 8.8L14 6M9 8.8V14.8" fill="none" stroke="#0d3a33" stroke-width="1"/></svg>
<svg style="left:740px;top:751px" width="18" height="17"><path d="M2.5 5.5V2.5H5.5M12.5 2.5H15.5V5.5M2.5 12.5V15.5H5.5M12.5 15.5H15.5V12.5" fill="none" stroke="#000" stroke-width="2.6"/><path d="M2.5 5.5V2.5H5.5M12.5 2.5H15.5V5.5M2.5 12.5V15.5H5.5M12.5 15.5H15.5V12.5" fill="none" stroke="#fff" stroke-width="1.3"/><path d="M7 16.5V13L3.8 10.2Q2.9 9.2 3.9 8.6Q4.7 8.2 5.7 9.1L7.2 10.4V4Q7.2 2.8 8.1 2.8Q9 2.8 9 4V8.5V2.6Q9 1.6 9.9 1.6Q10.8 1.6 10.8 2.6V8.5V3.2Q10.8 2.2 11.7 2.2Q12.6 2.2 12.6 3.2V8.8V4.8Q12.6 3.8 13.4 3.8Q14.3 3.8 14.3 4.8V12.2Q14.3 14 13.8 15L13.5 16.5Z" fill="#48b9c2" stroke="#0b2e33" stroke-width=".9"/></svg>
<div style="left:761px;top:3px;width:1px;height:50px;background:#2d4454"></div>
<div style="left:759px;top:75px;width:1px;height:673px;background:#111"></div>
<div style="left:760px;top:53px;width:1px;height:713px;background:#141b30"></div>
<div style="left:761px;top:53px;width:1px;height:713px;background:#4a74a8"></div></div></body></html>
